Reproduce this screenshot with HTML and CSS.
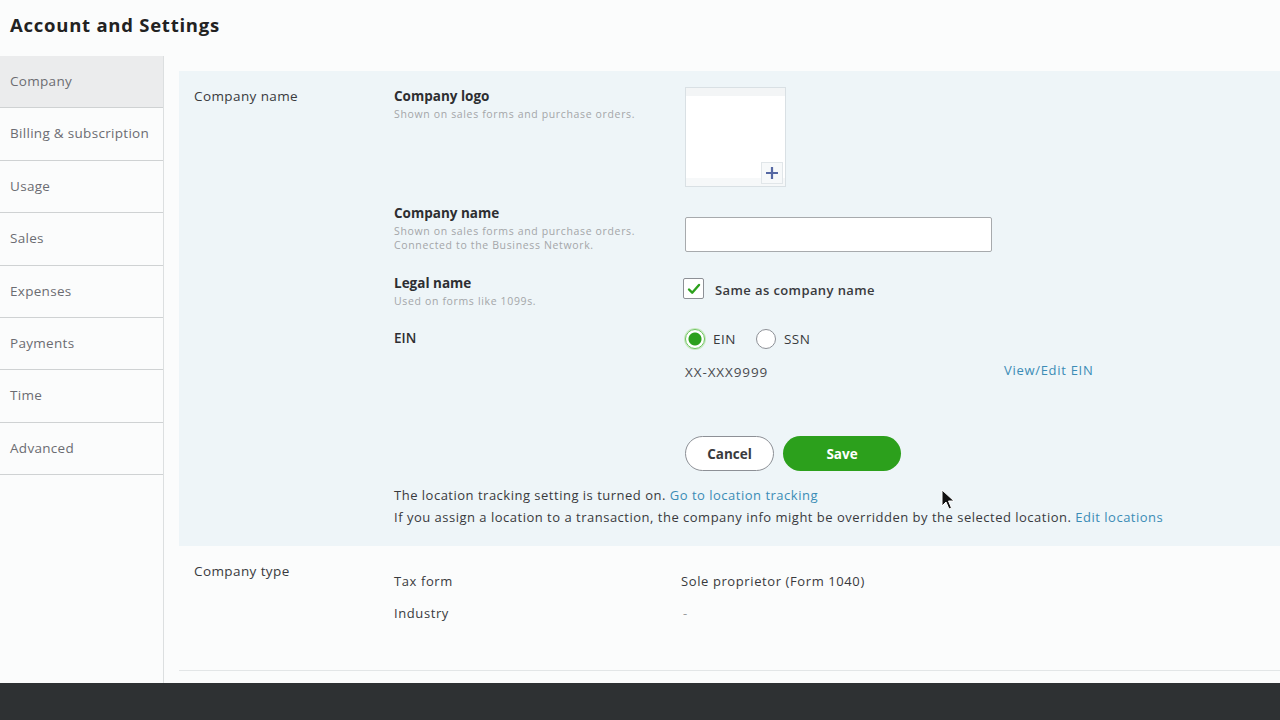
FILE: index.html
```html
<!DOCTYPE html>
<html lang="en">
<head>
    <meta charset="UTF-8">
    <meta name="viewport" content="width=device-width, initial-scale=1.0">
    <title>Account and Settings</title>
    <link rel="stylesheet" href="styles.css">
</head>
<body>

    <h1 class="page-title">Account and Settings</h1>

    <div class="layout">
        <ul class="settings-nav">
            <li class="active">Company</li>
            <li>Billing &amp; subscription</li>
            <li>Usage</li>
            <li>Sales</li>
            <li>Expenses</li>
            <li>Payments</li>
            <li>Time</li>
            <li>Advanced</li>
        </ul>

        <div class="settings-main">
            <div class="section editing">
                <div class="section-label">Company name</div>
                <div class="section-body">

                    <div class="field field-logo">
                        <div class="field-info">
                            <div class="field-title">Company logo</div>
                            <div class="field-hint">Shown on sales forms and purchase orders.</div>
                        </div>
                        <div class="field-control">
                            <div class="logo-box">
                                <span class="logo-add">
                                    <svg width="14" height="14" viewBox="0 0 14 14"><path d="M7 1v12M1 7h12" stroke="#5668a3" stroke-width="2.2" fill="none"/></svg>
                                </span>
                            </div>
                        </div>
                    </div>

                    <div class="field field-name">
                        <div class="field-info">
                            <div class="field-title">Company name</div>
                            <div class="field-hint">Shown on sales forms and purchase orders.<br>Connected to the Business Network.</div>
                        </div>
                        <div class="field-control">
                            <input type="text" class="text-input">
                        </div>
                    </div>

                    <div class="field field-legal">
                        <div class="field-info">
                            <div class="field-title">Legal name</div>
                            <div class="field-hint">Used on forms like 1099s.</div>
                        </div>
                        <div class="field-control">
                            <label class="check">
                                <span class="check-box">
                                    <svg width="16" height="16" viewBox="0 0 16 16"><path d="M3 8.5l3.2 3.2L13 4" stroke="#2ca01c" stroke-width="2.4" fill="none" stroke-linecap="round" stroke-linejoin="round"/></svg>
                                </span>
                                <span class="check-text">Same as company name</span>
                            </label>
                        </div>
                    </div>

                    <div class="field field-ein">
                        <div class="field-info">
                            <div class="field-title medium">EIN</div>
                        </div>
                        <div class="field-control">
                            <div class="radio-row">
                                <label class="radio"><span class="radio-dot on"></span>EIN</label>
                                <label class="radio"><span class="radio-dot"></span>SSN</label>
                            </div>
                            <div class="ein-row">
                                <span class="ein-value">XX-XXX9999</span>
                                <a class="link">View/Edit EIN</a>
                            </div>
                        </div>
                    </div>

                    <div class="actions">
                        <button class="btn btn-cancel">Cancel</button>
                        <button class="btn btn-save">Save</button>
                    </div>

                    <p class="location-note">
                        The location tracking setting is turned on. <a class="link">Go to location tracking</a><br>
                        If you assign a location to a transaction, the company info might be overridden by the selected location. <a class="link">Edit locations</a>
                    </p>
                </div>
            </div>

            <div class="section">
                <div class="section-label">Company type</div>
                <div class="section-body type-body">
                    <div class="type-row"><span class="type-key">Tax form</span><span>Sole proprietor (Form 1040)</span></div>
                    <div class="type-row"><span class="type-key">Industry</span><span class="muted">-</span></div>
                </div>
            </div>
        </div>
    </div>

    <div class="footer-bar"></div>

    <svg class="pointer" width="14" height="22" viewBox="0 0 14 22"><path d="M1 1v16l4-4 3 7 2.5-1-3-7h5.5z" fill="#111" stroke="#fff" stroke-width="1"/></svg>

</body>
</html>
```

FILE: styles.css
```css
body {
    font-family: 'Open Sans', 'Lato', sans-serif;
    background-color: #fbfcfc;
    color: #393a3d;
    letter-spacing: 0.5px;
    margin: 0;
    height: 720px;
    display: flex;
    flex-direction: column;
    position: relative;
    overflow: hidden;
}

.page-title {
    margin: 0;
    height: 56px;
    padding: 12px 0 0 10px;
    box-sizing: border-box;
    font-size: 18.5px;
    font-weight: 700;
    letter-spacing: 0.75px;
    color: #222;
}

.layout {
    flex: 1;
    display: flex;
}

/* left menu */
.settings-nav {
    list-style: none;
    margin: 0;
    padding: 0;
    width: 163px;
    border-right: 1px solid #dcdfe0;
    flex-shrink: 0;
}

.settings-nav li {
    height: 52.4px;
    box-sizing: border-box;
    line-height: 50px;
    padding-left: 10px;
    font-size: 13.5px;
    letter-spacing: 0.3px;
    color: #6b6c72;
    border-bottom: 1.5px solid #cfd2d3;
}

.settings-nav li.active {
    background-color: #ebeced;
}

.settings-main {
    flex: 1;
    padding: 15px 0 0 15px;
}

.section {
    display: flex;
    border-bottom: 1.5px solid #e3e6e7;
    padding: 16px 0 0 15px;
    height: 125px;
    box-sizing: border-box;
}

.section.editing {
    background-color: #eef5f8;
    border-bottom: none;
    height: 475px;
}

.section-label {
    width: 200px;
    font-size: 13.5px;
    letter-spacing: 0.4px;
}

.section-body {
    flex: 1;
}

.field {
    display: flex;
}

.field-logo {
    margin-bottom: 17px;
}

.field-name {
    margin-bottom: 22px;
}

.field-info {
    width: 291px;
}

.field-title {
    font-size: 13.5px;
    font-weight: 700;
    letter-spacing: 0;
    color: #2d2e31;
    line-height: 18px;
}

.field-title.medium {
    font-weight: 600;
}

.field-hint {
    font-size: 10.5px;
    letter-spacing: 0.65px;
    color: #a4a6a8;
    line-height: 14px;
    padding-top: 2px;
}

/* logo upload */
.logo-box {
    width: 99px;
    height: 98px;
    border: 1px solid #d9e0e4;
    background: linear-gradient(#f3f5f6 0 8px, #ffffff 8px 90px, #f6f8f9 90px);
    position: relative;
}

.logo-add {
    position: absolute;
    right: 2px;
    bottom: 2px;
    width: 20px;
    height: 20px;
    background: #f7f9fa;
    border: 1px solid #e1e6e9;
    display: flex;
    align-items: center;
    justify-content: center;
}

.text-input {
    margin-top: 13px;
    width: 307px;
    height: 35px;
    box-sizing: border-box;
    border: 1px solid #a7aaad;
    border-radius: 2px;
    background: #fff;
}

.field-legal {
    margin-bottom: 21px;
}

.check {
    display: flex;
    align-items: flex-start;
    gap: 11px;
    margin-top: 4px;
    margin-left: -2px;
}

.check-box {
    width: 19px;
    height: 19px;
    border: 1px solid #8d9096;
    border-radius: 2px;
    background: #fff;
    display: flex;
    align-items: center;
    justify-content: center;
}

.check-text {
    font-size: 13px;
    font-weight: 600;
    letter-spacing: 0.4px;
    line-height: 18px;
    color: #393a3d;
    padding-top: 3px;
}

.radio-row {
    display: flex;
    gap: 20px;
}

.radio {
    display: flex;
    align-items: center;
    gap: 8px;
    font-size: 13.5px;
    color: #393a3d;
}

.radio-dot {
    width: 18px;
    height: 18px;
    border-radius: 50%;
    border: 1px solid #8d9096;
    background: #fff;
    box-sizing: content-box;
}

.radio-dot.on {
    border-color: #6cc35b;
    background: radial-gradient(circle, #2ca01c 0 6px, #fff 7px);
    box-shadow: 0 0 0 1px #c7e9c0;
}

.ein-row {
    display: flex;
    align-items: center;
    margin-top: 10px;
}

.ein-value {
    font-size: 13.5px;
    letter-spacing: 0.9px;
    color: #4a4b4f;
    width: 319px;
    padding-top: 4px;
}

.link {
    color: #3b8cb6;
    font-size: 13px;
    cursor: pointer;
}

.ein-row .link {
    letter-spacing: 0.7px;
}

.field-ein {
    margin-bottom: 55px;
}

.actions {
    display: flex;
    gap: 9px;
    margin-left: 291px;
}

.btn {
    height: 35px;
    border-radius: 18px;
    font-family: inherit;
    font-size: 13.5px;
    font-weight: 700;
    letter-spacing: 0;
    cursor: pointer;
}

.btn-cancel {
    width: 89px;
    border: 1px solid #8d9096;
    background: #fff;
    color: #393a3d;
}

.btn-save {
    width: 118px;
    border: none;
    background-color: #2ca01c;
    color: #fff;
}

.location-note {
    margin: 13px 0 0 0;
    font-size: 13px;
    line-height: 22px;
    color: #393a3d;
}

/* company type block */
.type-body {
    padding-top: 10px;
}

.type-row {
    display: flex;
    font-size: 13px;
    letter-spacing: 0.6px;
    height: 32px;
    line-height: 18px;
}

.type-key {
    width: 287px;
}

.muted {
    color: #9a9c9e;
    padding-left: 2px;
}

.footer-bar {
    height: 37px;
    background-color: #2e3133;
}

.pointer {
    position: absolute;
    left: 941px;
    top: 489px;
}
```
